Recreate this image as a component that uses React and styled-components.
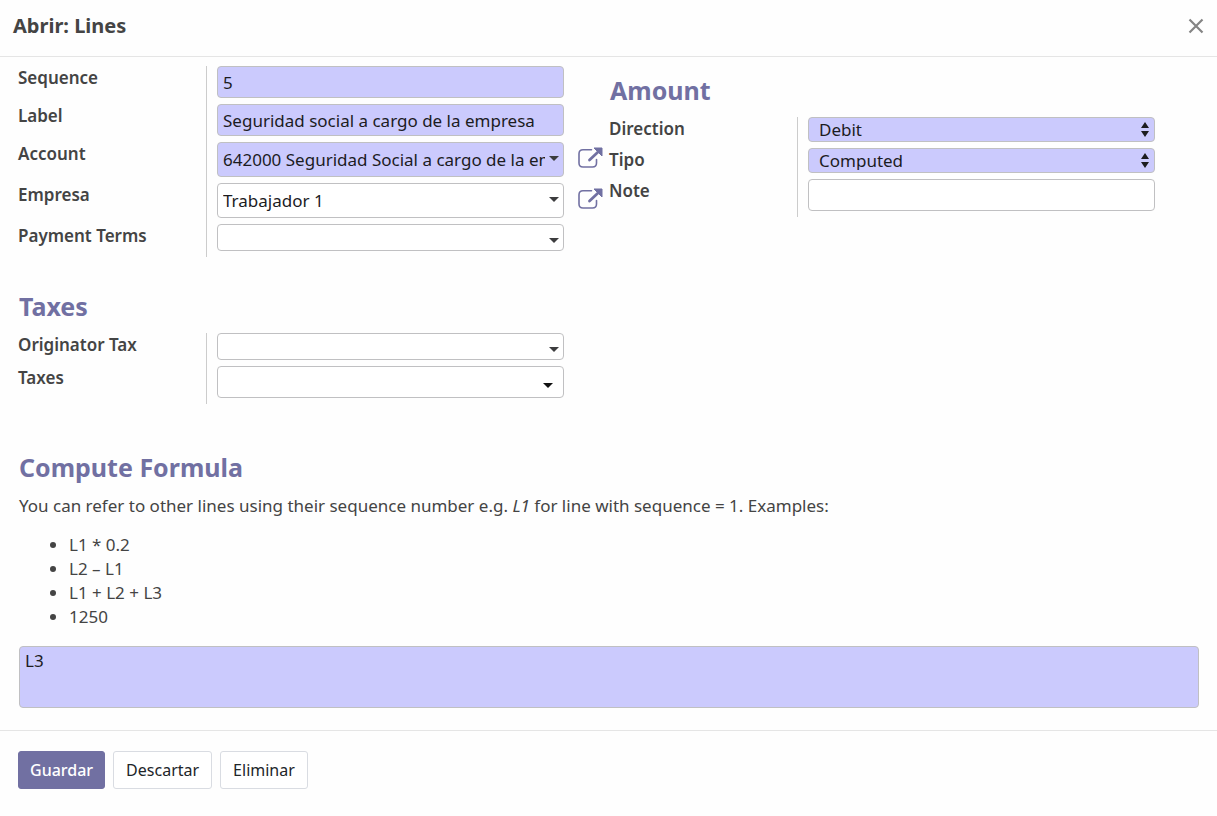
import React from "react";
import styled, { createGlobalStyle } from "styled-components";

const purple = "#7170a2";
const required = "#cbcafd";

const GlobalStyle = createGlobalStyle`
  *, *::before, *::after { box-sizing: border-box; }
  body {
    margin: 0;
    background: #fefefe;
    color: #444;
    font: 17px/24px "Noto Sans", "Open Sans", sans-serif;
  }
  button, input, select, textarea { font: inherit; color: #1c1c1f; }
`;

const Dialog = styled.div`
  display: flex;
  flex-direction: column;
`;

const Header = styled.header`
  display: flex;
  align-items: center;
  justify-content: space-between;
  height: 57px;
  padding: 0 12px 4px 13px;
  border-bottom: 1px solid #e5e5e5;
`;

const Title = styled.h1`
  margin: 0;
  font-size: 20px;
  line-height: 28px;
  font-weight: 700;
`;

const CloseButton = styled.button`
  display: flex;
  padding: 0;
  border: 0;
  background: none;
`;

const Body = styled.main`
  padding: 9px 17px 22px 18px;
`;

const Columns = styled.div`
  display: grid;
  grid-template-columns: 1fr 1fr;
  align-items: start;
`;

const Group = styled.section`
  padding-top: ${(p) => p.$top || 0}px;
`;

const Heading = styled.h2`
  margin: 0 0 10px 1px;
  font-size: 25px;
  line-height: 34px;
  font-weight: 700;
  color: ${purple};
`;

const Row = styled.div`
  display: grid;
  grid-template-columns: 189px minmax(0, 1fr) 45px;
`;

const Label = styled.label`
  border-right: 1px solid #ccc;
  font-weight: 600;
`;

const Cell = styled.div`
  padding: 0 0 6px 10px;
`;

const fieldBox = `
  display: block;
  width: 100%;
  margin: 0;
  border: 1px solid #c0c0c2;
  border-radius: 4px;
  outline: 0;
`;

const TextInput = styled.input`
  ${fieldBox}
  height: 32px;
  padding: 0 5px;
  background: ${(p) => (p.required ? required : "#fff")};
`;

const ComboWrap = styled.div`
  position: relative;
`;

const Select = styled.select`
  ${fieldBox}
  appearance: none;
  height: ${(p) => p.$height}px;
  padding: 0 18px ${(p) => (p.$compact ? 2 : 0)}px ${(p) => (p.$compact ? 10 : 5)}px;
  background: ${(p) => (p.required ? required : "#fff")};
`;

const Caret = styled.svg`
  position: absolute;
  right: ${(p) => p.$right}px;
  bottom: ${(p) => p.$bottom}px;
  pointer-events: none;
`;

const OpenButton = styled.button`
  align-self: start;
  display: flex;
  margin: 5px 0 0 14px;
  padding: 0;
  border: 0;
  background: none;
`;

const Hint = styled.p`
  margin: 0 1px 15px;
`;

const Examples = styled.ul`
  margin: 0 0 17px;
  padding-left: 51px;
`;

const Formula = styled.textarea`
  ${fieldBox}
  width: calc(100% - 2px);
  height: 62px;
  margin-left: 1px;
  padding: 2px 5px;
  resize: none;
  background: ${required};
`;

const Footer = styled.footer`
  display: flex;
  gap: 8px;
  padding: 20px 18px 26px;
  border-top: 1px solid #e5e5e5;
`;

const Button = styled.button`
  height: 38px;
  padding: 0 ${(p) => (p.$primary ? 11 : 12)}px;
  border: 1px solid ${(p) => (p.$primary ? purple : "#d9dce2")};
  border-radius: 3px;
  background: ${(p) => (p.$primary ? purple : "#fff")};
  color: ${(p) => (p.$primary ? "#fff" : "#212529")};
  font-size: 16px;
  font-weight: ${(p) => (p.$primary ? 500 : 400)};
`;

function Combo({ id, value = "", height, required: isRequired, bottom, right = 5, color = "#3c3c3e" }) {
  return (
    <ComboWrap>
      <Select id={id} $height={height} required={isRequired} defaultValue={value}>
        <option>{value}</option>
      </Select>
      <Caret $right={right} $bottom={bottom} width="10" height="5" viewBox="0 0 10 5" aria-hidden="true">
        <path d="M0 0h10L5 5z" fill={color} />
      </Caret>
    </ComboWrap>
  );
}

function Choice({ id, value }) {
  return (
    <ComboWrap>
      <Select id={id} $height={25} $compact required defaultValue={value}>
        <option>{value}</option>
      </Select>
      <Caret $right={6} $bottom={5} width="8" height="15" viewBox="0 0 8 15" aria-hidden="true">
        <path d="M0 6L4 0l4 6zM0 9h8l-4 6z" fill="#1c1c1f" />
      </Caret>
    </ComboWrap>
  );
}

function OpenRecord({ label }) {
  return (
    <OpenButton type="button" aria-label={label}>
      <svg width="25" height="23" viewBox="0 0 25 23" fill="none" aria-hidden="true">
        <path
          d="M13.5 2.8H5Q1 2.8 1 6.8V16q0 4 4 4h9.500q4 0 4-4v-3.500"
          stroke={purple}
          strokeWidth="1.6"
          strokeLinecap="round"
        />
        <path d="M11.5 13L20 5" stroke={purple} strokeWidth="2.8" strokeLinecap="round" />
        <path d="M16 1h8v8z" fill={purple} stroke={purple} strokeWidth="1" strokeLinejoin="round" />
      </svg>
    </OpenButton>
  );
}

function Field({ id, label, action, children }) {
  return (
    <Row>
      <Label htmlFor={id}>{label}</Label>
      <Cell>{children}</Cell>
      {action}
    </Row>
  );
}

export default function App() {
  return (
    <Dialog role="dialog" aria-labelledby="title">
      <GlobalStyle />
      <Header>
        <Title id="title">Abrir: Lines</Title>
        <CloseButton type="button" aria-label="Cerrar">
          <svg width="18" height="18" viewBox="0 0 18 18" aria-hidden="true">
            <path d="M2.5 2.5l13 13M15.5 2.5l-13 13" stroke="#848484" strokeWidth="2.2" />
          </svg>
        </CloseButton>
      </Header>
      <Body>
        <Columns>
          <Group>
            <Field id="sequence" label="Sequence">
              <TextInput id="sequence" required defaultValue="5" />
            </Field>
            <Field id="label" label="Label">
              <TextInput id="label" required defaultValue="Seguridad social a cargo de la empresa" />
            </Field>
            <Field id="account" label="Account" action={<OpenRecord label="Abrir cuenta" />}>
              <Combo
                id="account"
                required
                height={35}
                bottom={16}
                value="642000 Seguridad Social a cargo de la empresa"
              />
            </Field>
            <Field id="partner" label="Empresa" action={<OpenRecord label="Abrir empresa" />}>
              <Combo id="partner" height={35} bottom={16} value="Trabajador 1" />
            </Field>
            <Field id="terms" label="Payment Terms">
              <Combo id="terms" height={27} bottom={8} />
            </Field>
          </Group>
          <Group $top={7}>
            <Heading>Amount</Heading>
            <Field id="direction" label="Direction">
              <Choice id="direction" value="Debit" />
            </Field>
            <Field id="type" label="Tipo">
              <Choice id="type" value="Computed" />
            </Field>
            <Field id="note" label="Note">
              <TextInput id="note" />
            </Field>
          </Group>
          <Group $top={32}>
            <Heading>Taxes</Heading>
            <Field id="originator" label="Originator Tax">
              <Combo id="originator" height={27} bottom={8} />
            </Field>
            <Field id="taxes" label="Taxes">
              <Combo id="taxes" height={32} bottom={10} right={11} color="#111" />
            </Field>
          </Group>
        </Columns>
        <Group $top={46}>
          <Heading>Compute Formula</Heading>
          <Hint>
            You can refer to other lines using their sequence number e.g. <em>L1</em> for line with
            sequence = 1. Examples:
          </Hint>
          <Examples>
            <li>L1 * 0.2</li>
            <li>L2 – L1</li>
            <li>L1 + L2 + L3</li>
            <li>1250</li>
          </Examples>
          <Formula aria-label="Compute Formula" defaultValue="L3" />
        </Group>
      </Body>
      <Footer>
        <Button type="button" $primary>Guardar</Button>
        <Button type="button">Descartar</Button>
        <Button type="button">Eliminar</Button>
      </Footer>
    </Dialog>
  );
}
